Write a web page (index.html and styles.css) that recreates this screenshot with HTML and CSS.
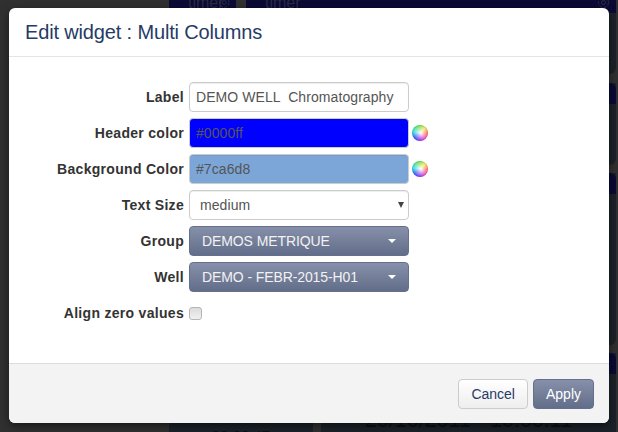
FILE: index.html
```html
<!DOCTYPE html>
<html lang="en">
<head>
    <meta charset="UTF-8">
    <meta name="viewport" content="width=device-width, initial-scale=1.0">
    <title>Edit widget</title>
    <link rel="stylesheet" href="styles.css">
</head>
<body>

<!-- dashboard behind the overlay -->
<div class="backdrop">
    <div class="tile-row row-top">
        <div class="tile tile-a">
            <div class="tile-header header-top">
                <span class="tile-title">timer</span>
                <svg class="gear" viewBox="0 0 13 13"><circle cx="6.5" cy="6.5" r="2"/><circle cx="6.5" cy="6.5" r="5" stroke-dasharray="3 1.5"/></svg>
            </div>
        </div>
        <div class="tile tile-b">
            <div class="tile-header header-top">
                <span class="tile-title">timer</span>
                <svg class="gear" viewBox="0 0 13 13"><circle cx="6.5" cy="6.5" r="2"/><circle cx="6.5" cy="6.5" r="5" stroke-dasharray="3 1.5"/></svg>
            </div>
        </div>
    </div>
    <div class="tile-row row-second">
        <div class="tile tile-wide"><div class="tile-header"></div></div>
    </div>
    <div class="tile-row row-third">
        <div class="tile tile-wide"><div class="tile-header"></div></div>
    </div>
    <div class="tile-row row-last">
        <div class="tile tile-c"><div class="tile-time">00:00:47</div></div>
        <div class="tile tile-d">
            <div class="tile-header"></div>
            <div class="tile-date">20/10/2011 - 10:00:11</div>
        </div>
    </div>
</div>

<div class="modal">
    <div class="modal-header">
        <h3>Edit widget : Multi Columns</h3>
    </div>

    <form class="modal-body">
        <div class="row">
            <label for="label">Label</label>
            <input type="text" id="label" class="field" value="DEMO WELL  Chromatography">
        </div>
        <div class="row">
            <label for="header-color">Header color</label>
            <input type="text" id="header-color" class="field color-header" value="#0000ff">
            <span class="wheel"></span>
        </div>
        <div class="row">
            <label for="bg-color">Background Color</label>
            <input type="text" id="bg-color" class="field color-bg" value="#7ca6d8">
            <span class="wheel"></span>
        </div>
        <div class="row">
            <label for="text-size">Text Size</label>
            <div class="select-wrap">
                <select id="text-size" class="field field-select">
                    <option>medium</option>
                    <option>small</option>
                    <option>large</option>
                </select>
            </div>
        </div>
        <div class="row">
            <label>Group</label>
            <button type="button" class="dropdown">DEMOS METRIQUE<span class="caret"></span></button>
        </div>
        <div class="row">
            <label>Well</label>
            <button type="button" class="dropdown">DEMO - FEBR-2015-H01<span class="caret"></span></button>
        </div>
        <div class="row">
            <label for="align-zero">Align zero values</label>
            <input type="checkbox" id="align-zero" class="check">
        </div>
    </form>

    <div class="modal-footer">
        <button type="button" class="btn">Cancel</button>
        <button type="button" class="btn btn-primary">Apply</button>
    </div>
</div>

</body>
</html>
```

FILE: styles.css
```css
body {
    margin: 0;
    height: 432px;
    overflow: hidden;
    background-color: #303030;
    font-family: 'Liberation Sans', Arial, sans-serif;
    font-size: 14px;
    color: #333;
    display: flex;
    justify-content: center;
    align-items: flex-start;
}

/* dimmed dashboard */
.backdrop {
    position: absolute;
    top: 0;
    left: 0;
    width: 618px;
    height: 432px;
    box-sizing: border-box;
    padding: 0 2px 0 169px;
    overflow: hidden;
    display: flex;
    flex-direction: column;
}

.tile-row {
    display: flex;
    flex-shrink: 0;
}

.row-top {
    height: 74px;
    gap: 10px;
    margin-bottom: 9px;
}

.row-second {
    height: 82px;
    margin-bottom: 8px;
}

.row-third {
    height: 172px;
    margin-bottom: 8px;
}

.row-last {
    height: 90px;
    gap: 8px;
}

.tile {
    background-color: #1c222a;
    border-radius: 0 0 6px 6px;
    overflow: hidden;
}

.tile-a {
    width: 67px;
}

.tile-b,
.tile-wide,
.tile-d {
    flex: 1;
}

.tile-c {
    width: 144px;
}

.tile-header {
    height: 21px;
    background-color: #0a0a35;
    border-radius: 0 6px 0 0;
}

.header-top {
    height: 13px;
    padding: 0 6px 0 19px;
    border-radius: 0;
    color: #2a2a45;
    display: flex;
    align-items: flex-start;
    justify-content: space-between;
}

.tile-title {
    font-size: 16px;
    line-height: 16px;
    margin-top: -5px;
}

.gear {
    width: 13px;
    height: 13px;
    margin-top: -4px;
    fill: none;
    stroke: #2f2f48;
    stroke-width: 1;
}

.tile-a .gear {
    margin-left: -6px;
}

.tile-time {
    margin-top: 74px;
    text-align: center;
    font-size: 15px;
    color: #0c1014;
}

.tile-date {
    margin-top: 34px;
    text-align: center;
    font-size: 21.5px;
    color: #0c1014;
    white-space: nowrap;
}

.modal {
    position: relative;
    margin-top: 8px;
    width: 600px;
    height: 415px;
    background-color: #fff;
    border-radius: 6px;
    box-shadow: 0 3px 9px rgba(0, 0, 0, 0.5);
    display: flex;
    flex-direction: column;
}

.modal-header {
    height: 48px;
    padding: 0 16px;
    border-bottom: 1px solid #e5e5e5;
    display: flex;
    align-items: center;
}

.modal-header h3 {
    margin: 0;
    font-size: 20px;
    font-weight: normal;
    letter-spacing: -0.15px;
    color: #263b66;
}

.modal-body {
    flex: 1;
    padding-top: 25px;
    display: flex;
    flex-direction: column;
    gap: 6px;
}

.row {
    display: flex;
    align-items: center;
    height: 30px;
}

.row label {
    width: 175px;
    margin-right: 5px;
    text-align: right;
    font-size: 14px;
    font-weight: bold;
    letter-spacing: 0.3px;
}

.field {
    width: 220px;
    height: 30px;
    padding: 0 6px;
    border: 1px solid #ccc;
    border-radius: 4px;
    box-sizing: border-box;
    background-color: #fff;
    font-family: inherit;
    font-size: 14px;
    letter-spacing: 0.08px;
    color: #555;
    box-shadow: inset 0 1px 1px rgba(0, 0, 0, 0.075);
}

.select-wrap {
    position: relative;
    display: flex;
}

.select-wrap::after {
    content: "";
    position: absolute;
    top: 12px;
    right: 5px;
    border-top: 6px solid #444;
    border-left: 3px solid transparent;
    border-right: 3px solid transparent;
    pointer-events: none;
}

.field-select {
    appearance: none;
    padding-left: 10px;
}

.color-header {
    background-color: #0000ff;
}

.color-bg {
    background-color: #7ca6d8;
}

.wheel {
    width: 16px;
    height: 16px;
    margin-left: 3px;
    border-radius: 50%;
    background:
        radial-gradient(circle at 55% 50%, #fff 0, rgba(255, 255, 255, 0) 68%),
        conic-gradient(#6fe040, #f0e040 45deg, #ff5040 95deg, #e030c0 140deg, #8030f0 185deg, #3060ff 230deg, #30e0e0 280deg, #6fe040);
    box-shadow: inset 0 0 1px rgba(60, 20, 100, 0.6);
}

.dropdown {
    width: 220px;
    height: 30px;
    padding: 0 12px;
    border: 1px solid #66708a;
    border-radius: 4px;
    background: linear-gradient(#8690aa, #626d89);
    color: #f2f2f2;
    font-family: inherit;
    font-size: 14px;
    letter-spacing: -0.1px;
    text-align: left;
    display: flex;
    align-items: center;
    justify-content: space-between;
}

.caret {
    width: 0;
    height: 0;
    border-top: 4px solid #fff;
    border-left: 4px solid transparent;
    border-right: 4px solid transparent;
}

.check {
    appearance: none;
    width: 13px;
    height: 13px;
    margin: 0;
    border: 1px solid #b5b5b5;
    border-radius: 3px;
    background: linear-gradient(#dcdcdc, #f0f0f0);
}

.modal-footer {
    height: 59px;
    padding-right: 15px;
    border-top: 1px solid #dcdcdc;
    border-radius: 0 0 6px 6px;
    background-color: #f3f3f3;
    display: flex;
    justify-content: flex-end;
    align-items: center;
    gap: 5px;
}

.btn {
    height: 30px;
    padding: 0 12px;
    border: 1px solid #ccc;
    border-radius: 4px;
    background: linear-gradient(#fff, #eee);
    color: #263b66;
    font-family: inherit;
    font-size: 14px;
}

.btn-primary {
    border-color: #66708a;
    background: linear-gradient(#8690aa, #626d89);
    color: #fff;
}
```
